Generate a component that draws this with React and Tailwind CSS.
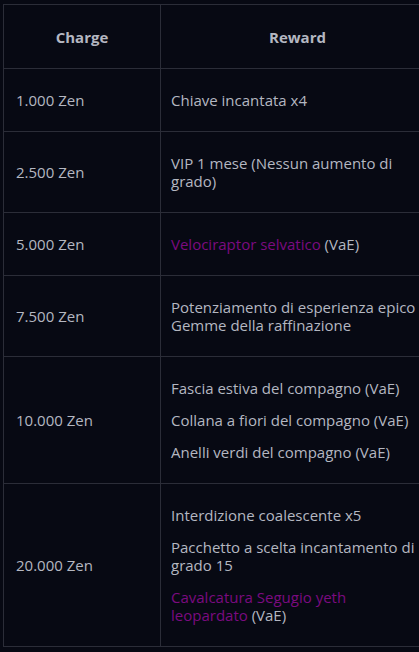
const rows = [
  { charge: "1.000 Zen", rewards: [[{ t: "Chiave incantata x4" }]] },
  { charge: "2.500 Zen", rewards: [[{ t: "VIP 1 mese (Nessun aumento di grado)" }]] },
  {
    charge: "5.000 Zen",
    rewards: [[{ t: "Velociraptor selvatico", link: true }, { t: " (VaE)" }]],
  },
  {
    charge: "7.500 Zen",
    rewards: [[{ t: "Potenziamento di esperienza epico" }, { br: true }, { t: "Gemme della raffinazione" }]],
  },
  {
    charge: "10.000 Zen",
    rewards: [
      [{ t: "Fascia estiva del compagno (VaE)" }],
      [{ t: "Collana a fiori del compagno (VaE)" }],
      [{ t: "Anelli verdi del compagno (VaE)" }],
    ],
  },
  {
    charge: "20.000 Zen",
    rewards: [
      [{ t: "Interdizione coalescente x5" }],
      [{ t: "Pacchetto a scelta incantamento di grado 15" }],
      [{ t: "Cavalcatura Segugio yeth leopardato", link: true }, { t: " (VaE)" }],
    ],
  },
];

export default function App() {
  return (
    <div
      className="w-[419px] h-[652px] overflow-hidden bg-[#070913] pt-[4px] pl-[3px]"
      style={{ fontFamily: '"Open Sans", sans-serif' }}
    >
      <table className="w-[432px] table-fixed border-collapse text-[15px] leading-[18px] text-[#b4b7c1]">
        <colgroup>
          <col className="w-[157px]" />
          <col />
        </colgroup>
        <thead>
          <tr className="h-[64px]">
            <th className="border border-[#2b2d38] font-bold text-center">Charge</th>
            <th className="border border-[#2b2d38] font-bold text-center">Reward</th>
          </tr>
        </thead>
        <tbody>
          {rows.map((r) => (
            <tr key={r.charge}>
              <td className="border border-[#2b2d38] pl-3 py-[22px] align-middle">{r.charge}</td>
              <td className="border border-[#2b2d38] pl-[10px] pr-2 py-[22px] align-middle">
                {r.rewards.map((p, i) => (
                  <p key={i} className={i > 0 ? "mt-[14px]" : ""}>
                    {p.map((s, j) =>
                      s.br ? (
                        <br key={j} />
                      ) : (
                        <span key={j} className={s.link ? "text-[#7b0b80]" : ""}>
                          {s.t}
                        </span>
                      )
                    )}
                  </p>
                ))}
              </td>
            </tr>
          ))}
        </tbody>
      </table>
    </div>
  );
}
